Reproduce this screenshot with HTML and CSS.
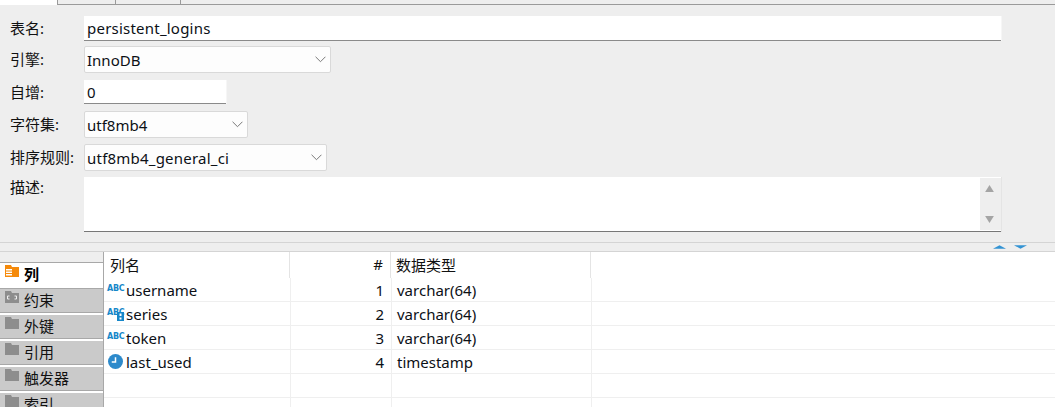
FILE: index.html
```html
<!DOCTYPE html>
<html lang="zh">
<head>
<meta charset="utf-8">
<title>persistent_logins</title>
<link rel="stylesheet" href="styles.css">
</head>
<body>
<div class="tabstrip">
  <div class="top-tab active"></div>
  <div class="top-tab t2"></div>
  <div class="top-tab t3"></div>
  <div class="tab-rest"></div>
</div>
<form class="form">
  <div class="frow r-name">
    <label class="lbl">表名:</label>
    <div class="field input wide spaced">persistent_logins</div>
  </div>
  <div class="frow r-engine">
    <label class="lbl">引擎:</label>
    <div class="field select w-engine">InnoDB<svg class="chev" viewBox="0 0 10 6"><path d="M.5.5 5 5 9.500.5"/></svg></div>
  </div>
  <div class="frow r-inc">
    <label class="lbl">自增:</label>
    <div class="field input w-inc">0</div>
  </div>
  <div class="frow r-charset">
    <label class="lbl">字符集:</label>
    <div class="field select w-charset">utf8mb4<svg class="chev" viewBox="0 0 10 6"><path d="M.5.5 5 5 9.500.5"/></svg></div>
  </div>
  <div class="frow r-coll">
    <label class="lbl">排序规则:</label>
    <div class="field select w-coll spaced">utf8mb4_general_ci<svg class="chev" viewBox="0 0 10 6"><path d="M.5.5 5 5 9.500.5"/></svg></div>
  </div>
  <div class="frow r-desc">
    <label class="lbl">描述:</label>
    <div class="textarea">
      <div class="ta-body"></div>
      <div class="scrollbar">
        <svg class="sb-arrow" viewBox="0 0 10 8"><path d="M5 0 10 8H0z"/></svg>
        <svg class="sb-arrow" viewBox="0 0 10 8"><path d="M0 0H10L5 8z"/></svg>
      </div>
    </div>
  </div>
</form>
<div class="splitter">
  <svg class="split-arrow" viewBox="0 0 14 4"><path d="M7 0 14 4H0z"/></svg>
  <svg class="split-arrow" viewBox="0 0 14 4"><path d="M0 0H14L7 4z"/></svg>
</div>
<div class="lower">
  <aside class="side">
    <div class="side-top"></div>
    <div class="side-tab on">
      <svg class="folder" viewBox="0 0 14 12"><path fill="#f58a0b" d="M0 0h6l1 2h7v10H0z"/><path fill="#fff" d="M1 4h6v1.500H1zM1 6.500h6V8H1zM1 9h6v1.500H1z"/></svg>列
    </div>
    <div class="side-tab">
      <svg class="folder" viewBox="0 0 14 12"><path fill="#8d8d8d" d="M0 0h6l1 2h7v10H0z"/><path fill="none" stroke="#eee" d="M4.500 5h-2v3h2M9.500 5h2v3h-2"/></svg>约束
    </div>
    <div class="side-tab"><svg class="folder" viewBox="0 0 14 12"><path fill="#8d8d8d" d="M0 0h6l1 2h7v10H0z"/></svg>外键</div>
    <div class="side-tab"><svg class="folder" viewBox="0 0 14 12"><path fill="#8d8d8d" d="M0 0h6l1 2h7v10H0z"/></svg>引用</div>
    <div class="side-tab"><svg class="folder" viewBox="0 0 14 12"><path fill="#8d8d8d" d="M0 0h6l1 2h7v10H0z"/></svg>触发器</div>
    <div class="side-tab"><svg class="folder" viewBox="0 0 14 12"><path fill="#8d8d8d" d="M0 0h6l1 2h7v10H0z"/></svg>索引</div>
  </aside>
  <div class="grid">
    <div class="row head">
      <div class="c1 hname">列名</div><div class="c2">#</div><div class="c3">数据类型</div><div class="c4"></div>
    </div>
    <div class="row">
      <div class="c1"><span class="abc">ABC</span>username</div><div class="c2">1</div><div class="c3">varchar(64)</div><div class="c4"></div>
    </div>
    <div class="row">
      <div class="c1"><span class="abc">ABC<svg class="keyico" viewBox="0 0 7 9"><path fill="#1787c9" d="M0 0h7v9H0z"/><path fill="#fff" d="M2.500 1.500h2v2.500h-2zM2.500 5.500h2v2h-2z"/></svg></span>series</div><div class="c2">2</div><div class="c3">varchar(64)</div><div class="c4"></div>
    </div>
    <div class="row">
      <div class="c1"><span class="abc">ABC</span>token</div><div class="c2">3</div><div class="c3">varchar(64)</div><div class="c4"></div>
    </div>
    <div class="row">
      <div class="c1"><span class="ico"><svg class="clock" viewBox="0 0 14 14"><circle cx="7" cy="7" r="7" fill="#2d8acb"/><path d="M7 3v4.500H3.500" fill="none" stroke="#fff" stroke-width="1.400"/></svg></span>last_used</div><div class="c2">4</div><div class="c3">timestamp</div><div class="c4"></div>
    </div>
    <div class="row"><div class="c1"></div><div class="c2"></div><div class="c3"></div><div class="c4"></div></div>
    <div class="row"><div class="c1"></div><div class="c2"></div><div class="c3"></div><div class="c4"></div></div>
  </div>
</div>
</body>
</html>
```
FILE: styles.css
```css
* { box-sizing: border-box; }
html, body { margin: 0; height: 407px; overflow: hidden; }
body {
  width: 1055px;
  background: #eeeeee;
  color: #111;
  font: 15px "Noto Sans", "Noto Sans CJK SC", sans-serif;
}
.tabstrip { display: flex; height: 5px; }
.top-tab { width: 58px; border-right: 1px solid #9a9a9a; border-bottom: 1px solid #9a9a9a; background: #eee; }
.top-tab.active { background: #fff; border-bottom: 0; }
.top-tab.t3 { width: 65px; }
.tab-rest { flex: 1; border-bottom: 1px solid #9a9a9a; }

.form { display: flex; flex-direction: column; padding: 11px 0 0; }
.frow { display: flex; align-items: center; }
.r-name { margin-bottom: 5px; }
.r-engine { margin-bottom: 7px; }
.r-inc { margin-bottom: 7px; }
.r-charset { margin-bottom: 6px; }
.r-coll { margin-bottom: 6px; }
.r-desc { align-items: flex-start; }
.lbl { width: 84px; flex: none; padding-left: 10px; padding-bottom: 1px; line-height: 20px; color: #111; }
.field { display: flex; align-items: center; padding-left: 3px; background: #fff; color: #0c1016; }
.spaced { letter-spacing: .22px; }
.input { border-bottom: 1px solid #8a8a8a; box-shadow: 1px 0 0 #f6f6f6; }
.wide { width: 917px; height: 25px; }
.select {
  justify-content: space-between;
  padding-left: 2px;
  padding-right: 3px;
  background: #fdfdfd;
  border: 1px solid #d9d9d9;
  border-radius: 2px;
}
.w-engine { width: 247px; height: 27px; }
.w-inc { width: 142px; height: 24px; }
.w-charset { width: 164px; height: 27px; }
.w-coll { width: 243px; height: 27px; }
.chev { width: 11px; height: 7px; margin-right: 1px; fill: none; stroke: #777; stroke-width: .9; }
.textarea {
  display: flex;
  width: 917px;
  height: 55px;
  background: #fff;
  border-bottom: 1px solid #777;
  box-shadow: 1px 0 0 #e4e4e4;
}
.ta-body { flex: 1; }
.scrollbar {
  width: 21px;
  margin: 1px 0 1px;
  background: #eeeeee;
  display: flex;
  flex-direction: column;
  justify-content: space-between;
  align-items: center;
  padding: 7px 2px 7px 0;
}
.sb-arrow { width: 9px; height: 7px; fill: #a4a4a4; }

.splitter {
  display: flex;
  justify-content: flex-end;
  align-items: center;
  gap: 8px;
  height: 10px;
  margin-top: 10px;
  padding-right: 28px;
  border-top: 1px solid #d4d4d4;
  border-bottom: 1px solid #d4d4d4;
}
.split-arrow { width: 13px; height: 4px; fill: #3393d3; }

.lower { display: flex; height: 155px; background: #fff; }
.side { width: 104px; flex: none; border-right: 1px solid #a8a8a8; overflow: hidden; }
.side-top { height: 11px; background: #eeeeee; border-bottom: 1px solid #a8a8a8; }
.side-tab {
  display: flex;
  align-items: center;
  height: 24px;
  margin-bottom: 2px;
  padding: 0 0 2px 5px;
  background: #cacaca;
  border-bottom: 1px solid #a8a8a8;
  color: #111;
}
.side-tab.on { background: #fff; font-weight: 700; height: 26px; margin-bottom: 0; padding-bottom: 4px; color: #000; }
.folder { width: 14px; height: 12px; margin: -5px 5px 0 0; flex: none; }

.grid { flex: 1; display: flex; flex-direction: column; }
.row { display: flex; height: 24px; flex: none; border-bottom: 1px solid #efefef; }
.row.head { height: 26px; border-bottom: 0; }
.c1, .c2, .c3, .c4 { display: flex; align-items: center; border-right: 1px solid #efefef; color: #0c1016; }
.c1 { width: 187px; padding-left: 3px; }
.c2 { width: 101px; justify-content: flex-end; padding-right: 7px; }
.c3 { width: 200px; padding-left: 5px; }
.c4 { flex: 1; border-right: 0; }
.head .c1, .head .c2, .head .c3 { padding-bottom: 2px; color: #111; border-right-color: #e4e4e4; }
.head .c1 { width: 186px; padding-left: 6px; }
.abc {
  position: relative;
  width: 17px;
  margin-right: 2px;
  padding-bottom: 1px;
  font: 700 8px/1 "DejaVu Sans", sans-serif;
  letter-spacing: -.3px;
  color: #1787c9;
  flex: none;
}
.keyico { position: absolute; right: 0; top: 3px; width: 7px; height: 9px; }
.ico { width: 19px; flex: none; display: flex; padding-left: 1px; }
.clock { width: 15px; height: 15px; }
```
